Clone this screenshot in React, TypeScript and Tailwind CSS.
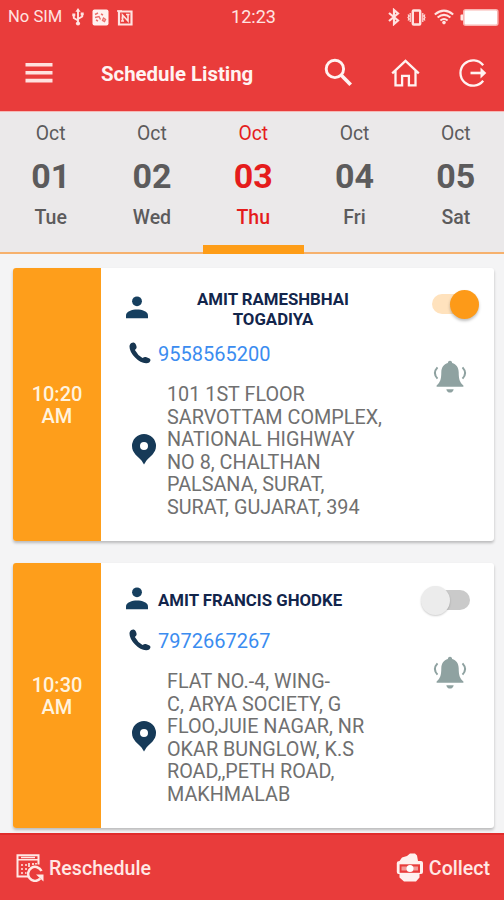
import { useState } from "react";

interface Day {
  month: string;
  date: string;
  weekday: string;
}

interface Appointment {
  id: string;
  time: string;
  period: string;
  name: string[];
  phone: string;
  address: string[];
  enabled: boolean;
}

const DAYS: Day[] = [
  { month: "Oct", date: "01", weekday: "Tue" },
  { month: "Oct", date: "02", weekday: "Wed" },
  { month: "Oct", date: "03", weekday: "Thu" },
  { month: "Oct", date: "04", weekday: "Fri" },
  { month: "Oct", date: "05", weekday: "Sat" },
];

const APPOINTMENTS: Appointment[] = [
  {
    id: "a1",
    time: "10:20",
    period: "AM",
    name: ["AMIT RAMESHBHAI", "TOGADIYA"],
    phone: "9558565200",
    address: [
      "101 1ST FLOOR",
      "SARVOTTAM COMPLEX,",
      "NATIONAL HIGHWAY",
      "NO 8, CHALTHAN",
      "PALSANA, SURAT,",
      "SURAT, GUJARAT, 394",
    ],
    enabled: true,
  },
  {
    id: "a2",
    time: "10:30",
    period: "AM",
    name: ["AMIT FRANCIS GHODKE"],
    phone: "7972667267",
    address: [
      "FLAT NO.-4, WING-",
      "C, ARYA SOCIETY, G",
      "FLOO,JUIE NAGAR, NR",
      "OKAR BUNGLOW, K.S",
      "ROAD,,PETH ROAD,",
      "MAKHMALAB",
    ],
    enabled: false,
  },
];

function StatusBar() {
  return (
    <div className="flex h-[34px] items-center pl-2 pr-[5px] text-[#ffe3e1]">
      <div className="flex flex-1 items-center">
        <span className="text-[16.6px] leading-5">No SIM</span>
        <svg className="ml-[10px]" width="12" height="18" viewBox="0 0 12 18" fill="none" stroke="currentColor" strokeWidth="1.9">
          <path d="M6 2v13M6 12.5L1.8 10V7M6 11l4.2-2.5V6" />
          <path d="M6 0l2.6 3.8H3.4z" fill="currentColor" stroke="none" />
          <circle cx="6" cy="15.5" r="2.1" fill="currentColor" stroke="none" />
          <path d="M.3 5.500h3v2.800h-3zM8.700 4.500h3v2.800h-3z" fill="currentColor" stroke="none" />
        </svg>
        <svg className="ml-[8px]" width="17" height="17" viewBox="0 0 17 17">
          <rect x=".5" y=".5" width="16" height="16" rx="2" fill="#fff1f0" />
          <path d="M3 5.5l3-1.5M3 8.5l4-1 1.5 3M9 5l2 1M11.5 9l2 1.5-1 2-2-1zM4 11l2 1" stroke="#ec6f6c" strokeWidth="1.4" fill="none" />
        </svg>
        <svg className="ml-[8px]" width="16" height="17" viewBox="0 0 16 17" fill="none" stroke="currentColor">
          <path d="M2 2.5h12.5v13H2z" strokeWidth="2.2" />
          <path d="M0 2h5M5.5 12.5V6l5.5 6V6M4.5 9h2M9 5.500h3.500M4 12h3" strokeWidth="1.6" />
        </svg>
      </div>
      <span className="text-[18px] leading-5">12:23</span>
      <div className="flex flex-1 items-center justify-end">
        <svg width="12" height="18" viewBox="0 0 12 18" fill="none" stroke="currentColor" strokeWidth="2.2">
          <path d="M1 5l9 7.5L6 16V2l4 3.5L1 13" />
        </svg>
        <svg className="ml-[7px]" width="19" height="17" viewBox="0 0 19 17" fill="none" stroke="currentColor">
          <rect x="5.8" y="1.5" width="7.4" height="14" rx=".8" strokeWidth="2.4" />
          <path d="M3.2 4v9M15.8 4v9M1 5.5l1 1.5-1 1.5 1 1.5-1 1.5M18 5.5L17 7l1 1.5-1 1.5 1 1.5" strokeWidth="1.2" />
        </svg>
        <svg className="ml-[8px]" width="20" height="16" viewBox="0 0 20 16" fill="none" stroke="currentColor" strokeWidth="2">
          <path d="M.8 5.5Q10-2.2 19.2 5.5M3.6 8.6q6.4-5.4 12.8 0M6.4 11.5q3.6-3 7.2 0" />
          <circle cx="10" cy="13.6" r="1.8" fill="currentColor" stroke="none" />
        </svg>
        <svg className="ml-[6px]" width="39" height="17" viewBox="0 0 39 17">
          <path d="M1.5 5.5H4v6H1.5Q.5 11.5.5 10.5v-4q0-1 1-1z" fill="#ffe9e7" />
          <rect x="3.8" y=".8" width="34" height="15.4" rx="2" fill="#fff" stroke="#f9b5b2" strokeWidth="1.6" />
        </svg>
      </div>
    </div>
  );
}

function Header() {
  return (
    <div className="flex h-[77px] items-center pl-[25px] pr-[16px] text-[#fff3f1]">
      <svg width="28" height="20" viewBox="0 0 28 20" fill="#ffe2df">
        <path d="M.5 0h27v3.6H.5zM.5 7.9h27v3.6H.5zM.5 15.8h27v3.6H.5z" />
      </svg>
      <h1 className="ml-[48px] flex-1 pt-[2px] text-[20.4px] font-bold leading-6">Schedule Listing</h1>
      <svg width="29" height="29" viewBox="0 0 29 29" fill="none" stroke="currentColor">
        <circle cx="10.9" cy="10.9" r="8.7" strokeWidth="2.9" />
        <path d="M17.3 17.3l9.4 9.4" strokeWidth="3.7" />
      </svg>
      <svg className="ml-[38px]" width="29" height="29" viewBox="0 0 29 29" fill="none" stroke="currentColor" strokeWidth="2.3">
        <path d="M1.2 15.3L14.5 2.9l13.3 12.4M4.5 12.7v14.6h6.6v-9.4h6.800v9.4h6.600V12.7" />
      </svg>
      <svg className="ml-[38px]" width="30" height="30" viewBox="0 0 30 30" fill="none" stroke="currentColor" strokeWidth="2.3">
        <path d="M25.2 7.2a12.7 12.7 0 1 0 0 15.600" />
        <path d="M12.5 15H25" strokeWidth="2.6" />
        <path d="M22.500 9.600l5.800 5.400-5.800 5.400z" fill="currentColor" stroke="none" />
      </svg>
    </div>
  );
}

function DateStrip({ selected, onSelect }: { selected: string; onSelect: (date: string) => void }) {
  return (
    <div className="flex h-[143px] shrink-0 border-b-2 border-[#f6b16d] border-t border-t-[#f6b9b6] bg-[#ebe9ea]">
      {DAYS.map((day) => {
        const isActive = day.date === selected;
        return (
          <button
            key={day.date}
            onClick={() => onSelect(day.date)}
            className={`-mb-[2px] flex w-[101.3px] shrink-0 flex-col items-center pt-[10px] ${
              isActive ? "border-b-[9px] border-[#fe9d18] text-[#e51c1c]" : "text-[#5c5b5c]"
            }`}
          >
            <span className="text-[19.3px] leading-6">{day.month}</span>
            <span className="mt-[11px] text-[34px] font-bold leading-[38px]">{day.date}</span>
            <span className="mt-[11px] text-[19.5px] font-medium leading-6">{day.weekday}</span>
          </button>
        );
      })}
    </div>
  );
}

function Toggle({ on, onChange }: { on: boolean; onChange: () => void }) {
  return (
    <button
      role="switch"
      aria-checked={on}
      onClick={onChange}
      className={`flex h-[30px] w-[48px] items-center ${on ? "mr-[15px] justify-end" : "mr-[25px]"}`}
    >
      {on && <span className="-mr-[18px] h-5 w-[36px] rounded-full bg-[#ffe2bd]" />}
      <span
        className={`z-10 size-[29px] shrink-0 rounded-full ${
          on ? "bg-[#fd9a18] shadow-[0_2px_3px_rgba(0,0,0,0.25)]" : "bg-[#ececec] shadow-[0_1px_2px_rgba(0,0,0,0.2)]"
        }`}
      />
      {!on && <span className="-ml-[16px] h-5 w-[36px] shrink-0 rounded-full bg-[#cacaca]" />}
    </button>
  );
}

function BellIcon() {
  return (
    <svg width="34" height="33" viewBox="0 0 34 33" fill="#8fa2a1">
      <path d="M17 .8c1.4 0 2.2 1 2.1 2.2 4.2 1.2 6.5 4.6 6.6 9.2.1 7 .8 9.6 4.7 13.3v1.2H3.6v-1.2c3.9-3.7 4.6-6.3 4.7-13.3.1-4.6 2.4-8 6.6-9.2C14.8 1.8 15.6.8 17 .8z" />
      <path d="M13.3 29.2h7.4q-.8 3.4-3.7 3.4t-3.7-3.4z" />
      <path d="M4.5 7.3q-5.2 5.7 0 11.4M29.5 7.3q5.2 5.7 0 11.4" fill="none" stroke="#8fa2a1" strokeWidth="2" />
    </svg>
  );
}

function AppointmentCard({ item }: { item: Appointment }) {
  const [enabled, setEnabled] = useState(item.enabled);

  return (
    <div className="flex overflow-hidden rounded-[3px] bg-white shadow-[0_2px_3px_rgba(0,0,0,0.24)]">
      <div className="flex w-[88px] shrink-0 flex-col items-center justify-center bg-[#fe9e1b] pt-[2px] text-[20px] font-medium leading-[22.5px] text-[#fff3df]">
        <span>{item.time}</span>
        <span>{item.period}</span>
      </div>

      {/* Patient details */}
      <div className="flex-1 pb-[21px] pl-[25px] pt-[21px]">
        <div className="flex min-h-8 items-center text-[#12254b]">
          <svg className="-mt-[3px]" width="22" height="23" viewBox="0 0 22 23" fill="#163f5f">
            <circle cx="11" cy="5.3" r="4.9" />
            <path d="M0 22.2v-2.800c0-4 6.200-5.900 11-5.900s11 1.900 11 5.900v2.800z" />
          </svg>
          <div className={`ml-[10px] whitespace-nowrap text-[16.8px] font-bold leading-5 ${item.name.length > 1 ? "w-[230px] text-center" : ""}`}>
            {item.name.map((line) => (
              <div key={line}>{line}</div>
            ))}
          </div>
        </div>

        <div className="mt-[13px] flex h-[22px] items-center pl-[3px]">
          <svg width="22" height="22" viewBox="0 0 22 22" fill="#173651">
            <path d="M4.700.6q1.500.2 2.300 2.100l.5 1.800q.4 1.300-.7 2.400L5.900 8q2.700 5.200 7.600 8l1.500-.8q.8-.5 1.900-.1l3.600 1.400q1.200.7.900 1.900-.4 2.500-4 2.900-5.800.2-11.300-5.700Q-.2 8.800.6 3.500 1.400.5 4.700.6z" />
          </svg>
          <a className="ml-[7px] pt-px text-[20px] leading-[22px] text-[#3b8cf0]">{item.phone}</a>
        </div>

        <div className="mt-[19px] flex items-center pl-[6px]">
          <svg className="-mt-[3px]" width="24" height="31" viewBox="0 0 24 31" fill="#163a58">
            <path fillRule="evenodd" d="M12 0a12 12 0 0 1 12 12c0 7-6 10.5-9.5 14.5L12 30.5l-2.500-4C6 22.5 0 19 0 12A12 12 0 0 1 12 0zm0 8a4 4 0 1 0 0 8 4 4 0 0 0 0-8z" />
          </svg>
          <div className="ml-[11px] whitespace-nowrap pt-px text-[19.8px] leading-[22.6px] text-[#707070]">
            {item.address.map((line) => (
              <div key={line}>{line}</div>
            ))}
          </div>
        </div>
      </div>

      <div className={`flex shrink-0 flex-col items-end ${enabled ? "pt-[21px]" : "pt-[22px]"}`}>
        <Toggle on={enabled} onChange={() => setEnabled(!enabled)} />
        <div className="mr-[27px] mt-[41px]">
          <BellIcon />
        </div>
      </div>
    </div>
  );
}

function Footer() {
  return (
    <div className="flex h-[67px] shrink-0 items-center justify-between border-t-2 border-[#e02c2b] bg-[#e93c3b] pl-4 pr-[14px] text-[19.6px] font-medium leading-6 text-[#ffe8e5]">
      <button className="flex items-center">
        <svg width="28" height="28" viewBox="0 0 28 28" fill="none" stroke="currentColor">
          <path d="M13 22.5H1.500V1.300h21v9.200" strokeWidth="2" />
          <path d="M1.500 5.700h21M5 3.500h14" strokeWidth="1.500" />
          <path d="M5 11h2M5 15h2M5 19h2M9 11h2M9 15h2M9 19h1.500M13 9v4M17 9v2M20 9v1.500" strokeWidth="1.700" />
          <path d="M25.500 17a7 7 0 1 0-1.300 7.700" strokeWidth="2.500" />
          <path d="M20 20.500h7.500v7z" fill="currentColor" stroke="none" />
        </svg>
        <span className="ml-[5px] pt-[2px]">Reschedule</span>
      </button>
      <button className="flex items-center">
        <svg width="28" height="29" viewBox="0 0 28 29">
          <path d="M3.500 8L6 4.500 11 3l3-2.500h5L21 2.500 22 8h3q2 0 2 2v9q0 2-2 2h-1.500v3.500L20 28.500H8L3.500 24.500V21H2.500q-1.700 0-1.700-2v-9Q.8 8 3.500 8z" fill="#fff0ee" />
          <rect x="3.600" y="11.300" width="20.400" height="8.500" fill="#e93c3b" />
          <rect x="5.500" y="13.500" width="16.500" height="4" fill="#f39a98" />
          <circle cx="14" cy="15.500" r="3.500" fill="#fff" />
        </svg>
        <span className="ml-[5px] pt-[2px]">Collect</span>
      </button>
    </div>
  );
}

export default function App() {
  const [selected, setSelected] = useState("03");

  return (
    <div className="flex h-[900px] w-[504px] flex-col overflow-hidden bg-[#f4f4f5] font-[Roboto,sans-serif]">
      <div className="shrink-0 bg-[#e93c3b]">
        <StatusBar />
        <Header />
      </div>
      <DateStrip selected={selected} onSelect={setSelected} />
      <div className="flex min-h-0 flex-1 flex-col gap-[22.5px] overflow-hidden pl-[13px] pr-[10px] pt-[14px]">
        {APPOINTMENTS.map((item) => (
          <AppointmentCard key={item.id} item={item} />
        ))}
      </div>
      <Footer />
    </div>
  );
}
